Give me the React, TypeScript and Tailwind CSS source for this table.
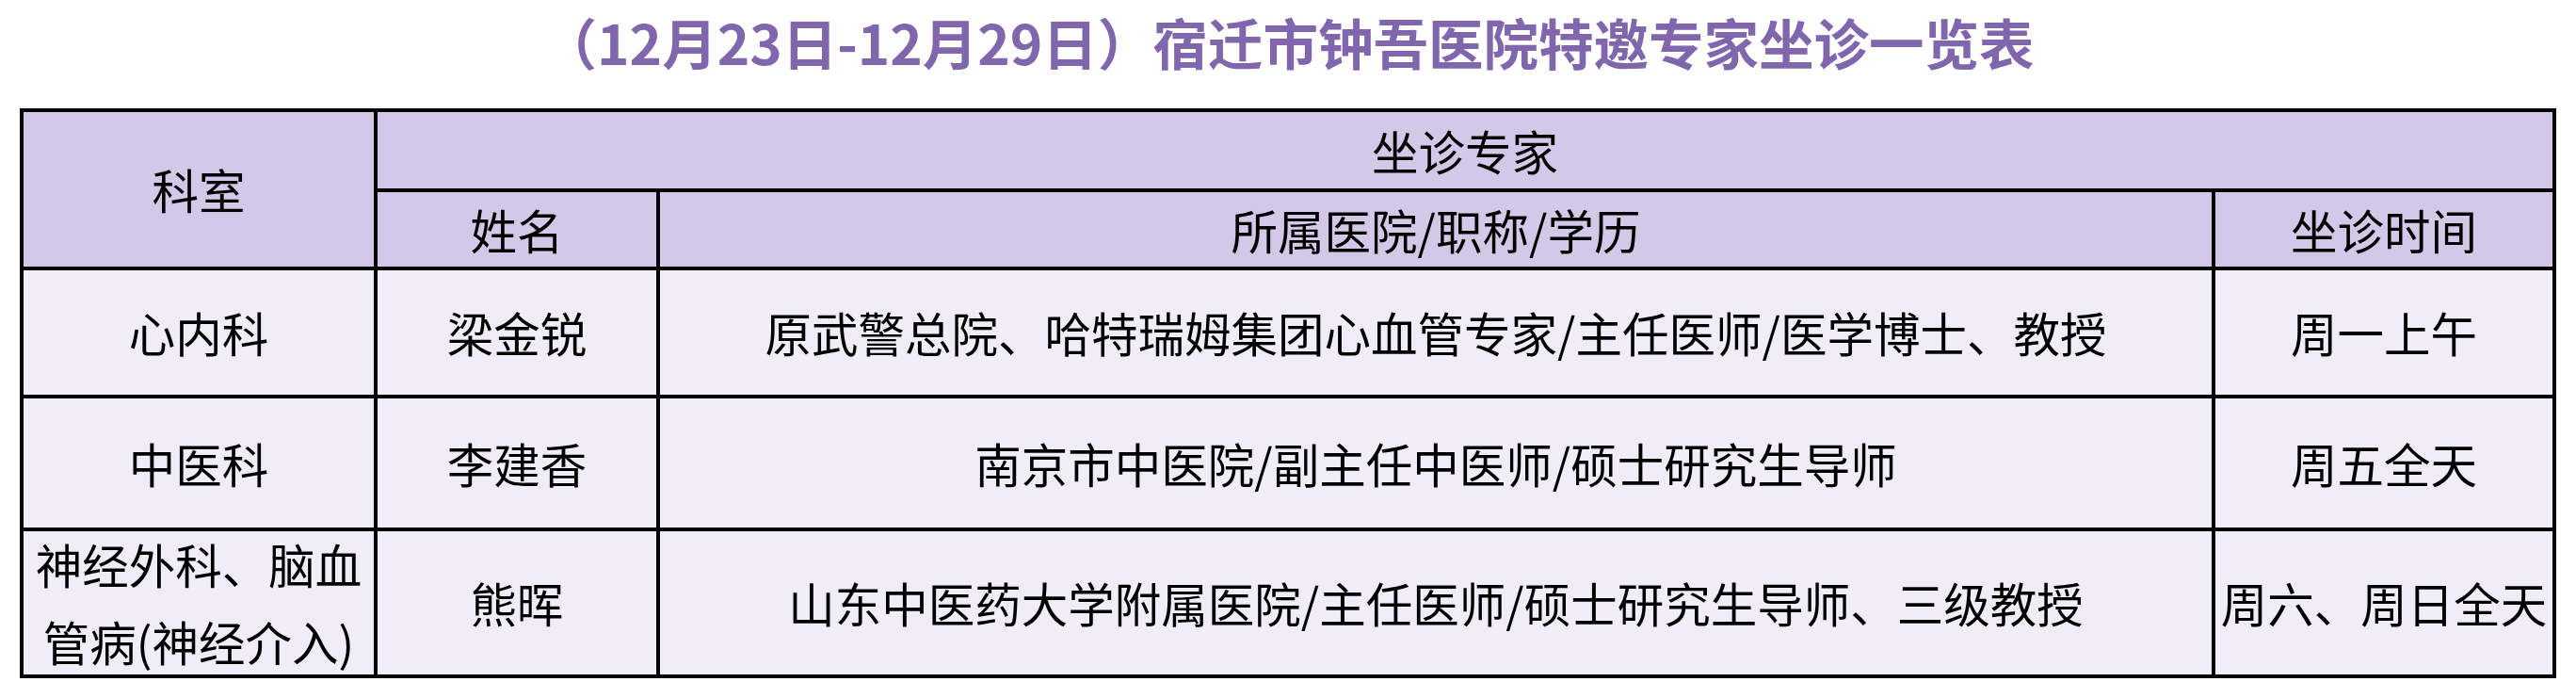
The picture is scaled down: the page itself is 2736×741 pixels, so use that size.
import React from "react";

const font = { fontFamily: '"Noto Sans CJK SC", "Noto Sans", sans-serif' };

function Cell({
  children,
  className = "",
}: {
  children: React.ReactNode;
  className?: string;
}) {
  return (
    <div
      className={`flex items-center justify-center text-center text-[49.5px] text-black leading-[1.2] ${className}`}
    >
      {children}
    </div>
  );
}

export default function App() {
  const rows = [
    {
      dept: "心内科",
      name: "梁金锐",
      info: "原武警总院、哈特瑞姆集团心血管专家/主任医师/医学博士、教授",
      time: "周一上午",
    },
    {
      dept: "中医科",
      name: "李建香",
      info: "南京市中医院/副主任中医师/硕士研究生导师",
      time: "周五全天",
    },
    {
      dept: "神经外科、脑血管病(神经介入)",
      name: "熊晖",
      info: "山东中医药大学附属医院/主任医师/硕士研究生导师、三级教授",
      time: "周六、周日全天",
    },
  ];

  return (
    <div className="w-[2736px] h-[741px] bg-white" style={font}>
      <div className="h-[87px] leading-[87px] text-center text-[58.5px] font-bold text-[#8066ad] whitespace-nowrap">
        （12月23日-12月29日）宿迁市钟吾医院特邀专家坐诊一览表
      </div>
      <div className="mt-[28px] mx-auto w-[2694px] bg-black p-[4px] grid grid-cols-[372px_296px_1648px_358px] grid-rows-[81px_79px_132px_137px_152px] gap-[4px]">
        <Cell className="row-span-2 bg-[#d3c8e7]">科室</Cell>
        <Cell className="col-span-3 bg-[#d3c8e7]">坐诊专家</Cell>
        <Cell className="bg-[#d3c8e7]">姓名</Cell>
        <Cell className="bg-[#d3c8e7]">所属医院/职称/学历</Cell>
        <Cell className="bg-[#d3c8e7]">坐诊时间</Cell>
        {rows.map((r, i) => (
          <React.Fragment key={i}>
            <Cell className={`bg-[#f0edf8] ${i === 2 ? "leading-[82px]" : ""}`}>
              {i === 2 ? (
                <span>
                  神经外科、脑血
                  <br />
                  管病(神经介入)
                </span>
              ) : (
                r.dept
              )}
            </Cell>
            <Cell className="bg-[#f0edf8]">{r.name}</Cell>
            <Cell className="bg-[#f0edf8]">{r.info}</Cell>
            <Cell className="bg-[#f0edf8] whitespace-nowrap">{r.time}</Cell>
          </React.Fragment>
        ))}
      </div>
    </div>
  );
}
